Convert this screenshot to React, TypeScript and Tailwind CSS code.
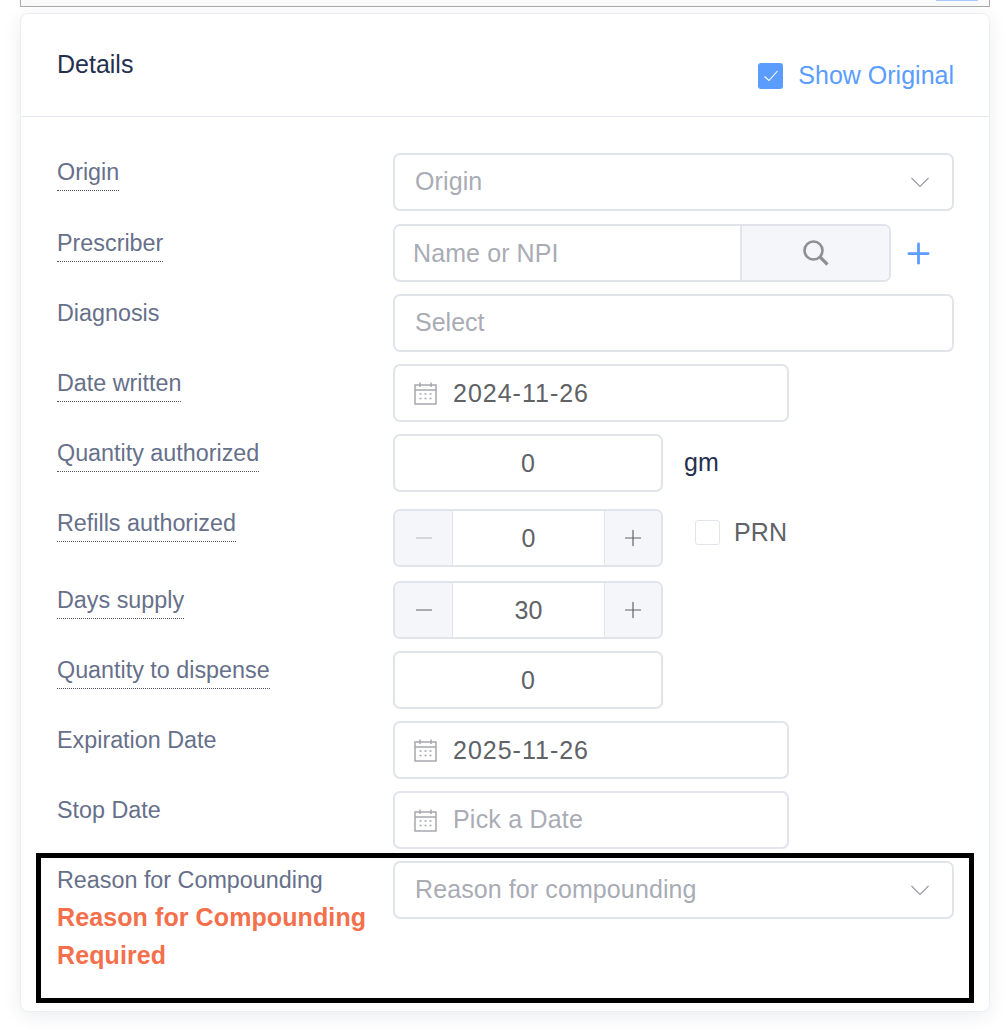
import React from 'react';
import { Plus, Minus } from 'lucide-react';

const boxCls = 'h-[58px] rounded-[7px] border-2 border-[#e2e4ec] bg-white';

function Chevron() {
    return (
        <svg width="18" height="11" viewBox="0 0 18 11" fill="none" stroke="#9b9ca3" strokeWidth="1.2">
            <path d="M0.5 1 L9 9.5 L17.5 1" />
        </svg>
    );
}

function CalendarIcon() {
    return (
        <svg width="23" height="23" viewBox="0 0 23 23" fill="none" stroke="#a6a8b0" strokeWidth="1.5">
            <rect x="1" y="3" width="21" height="19" />
            <path d="M1 8 H22 M6 0.5 V5 M17 0.5 V5" />
            <path d="M5.5 12 H7.5 M10.5 12 H12.5 M15.5 12 H17.5 M5.5 16.5 H7.5 M10.5 16.5 H12.5 M15.5 16.5 H17.5" />
        </svg>
    );
}

function SearchIcon() {
    return (
        <svg width="26" height="26" viewBox="0 0 26 26" fill="none" stroke="#8f9094" className="ml-px">
            <circle cx="10.5" cy="10.5" r="9" strokeWidth="2.6" />
            <path d="M17 17 L24.5 24.5" strokeWidth="3.2" />
        </svg>
    );
}

function Label({ text, dotted }: { text: string; dotted?: boolean }) {
    return (
        <span className={`inline-block text-[23.33px] leading-[36px] text-[#67708a] ${dotted ? 'border-b border-dotted border-[#55586a]' : ''}`}>
            {text}
        </span>
    );
}

function Row({ label, dotted, className, children }: { label: string; dotted?: boolean; className?: string; children: React.ReactNode }) {
    return (
        <div className={`flex ${className ?? ''}`}>
            <div className="w-[336px] shrink-0 pt-px">
                <Label text={label} dotted={dotted} />
            </div>
            <div className="min-w-0 flex-1">{children}</div>
        </div>
    );
}

function SelectBox({ placeholder }: { placeholder: string }) {
    return (
        <div className={`${boxCls} flex items-center justify-between pl-[20px] pr-[23px]`}>
            <span className="text-[25px] tracking-[0.1px] text-[#a9acb5]">{placeholder}</span>
            <Chevron />
        </div>
    );
}

function DateBox({ value, placeholder }: { value?: string; placeholder?: string }) {
    return (
        <div className={`${boxCls} flex w-[396px] items-center gap-[16px] pl-[19px]`}>
            <CalendarIcon />
            {value ? (
                <span className="pt-[2px] text-[25px] tracking-[1px] text-[#606266]">{value}</span>
            ) : (
                <span className="text-[25px] tracking-[0.2px] text-[#a9acb5]">{placeholder}</span>
            )}
        </div>
    );
}

function NumberBox({ value }: { value: string }) {
    return (
        <div className={`${boxCls} flex w-[270px] items-center justify-center pt-[2px] text-[25px] text-[#606266]`}>
            {value}
        </div>
    );
}

function Stepper({ value, minusDisabled }: { value: string; minusDisabled?: boolean }) {
    return (
        <div className={`${boxCls} flex w-[270px] items-stretch overflow-hidden`}>
            <div className="flex w-[58px] items-center justify-center border-r border-[#e2e4ec] bg-[#f5f6fa]">
                <Minus size={26} strokeWidth={1.1} color={minusDisabled ? '#b4b6bc' : '#606266'} />
            </div>
            <div className="flex flex-1 items-center justify-center pt-[2px] text-[25px] text-[#606266]">{value}</div>
            <div className="flex w-[57px] items-center justify-center border-l border-[#e2e4ec] bg-[#f5f6fa]">
                <Plus size={26} strokeWidth={1.1} color="#606266" />
            </div>
        </div>
    );
}

export default function App() {
    return (
        <div className="h-[1030px] w-[1008px] overflow-hidden bg-white font-['Liberation_Sans',Arial,sans-serif]">
            {/* cut-off panel above */}
            <div className="ml-[20px] mr-[18px] flex h-[7px] justify-end border-x border-b border-[#ababab] bg-[#fafafa] pr-[11px]">
                <div className="h-px w-[42px] bg-[#a6c9ff]" />
            </div>

            <div className="ml-[20px] mr-[18px] mt-[6px] h-[999px] rounded-[8px] border border-[#eceef3] bg-white shadow-[0_4px_18px_rgba(40,50,90,0.09)]">
                <div className="flex h-[103px] justify-between border-b border-[#e6e8ef] pl-[36px] pr-[35px]">
                    <h2 className="pt-[33px] text-[25px] leading-[34px] font-normal text-[#252f4f]">Details</h2>
                    <label className="flex items-center gap-[15px] pt-[22px]">
                        <span className="flex h-[26px] w-[25px] items-center justify-center rounded-[3px] bg-[#5b9dff]">
                            <svg width="16" height="14" viewBox="0 0 16 14" fill="none" stroke="#fff" strokeWidth="1.1">
                                <path d="M1.5 7.5 L6 11.5 L14.5 2" />
                            </svg>
                        </span>
                        <span className="text-[25px] text-[#5b9dff]">Show Original</span>
                    </label>
                </div>

                <div className="flex flex-col gap-[12px] pl-[36px] pr-[35px] pt-[36px]">
                    <Row label="Origin" dotted className="mb-px">
                        <SelectBox placeholder="Origin" />
                    </Row>
                    <Row label="Prescriber" dotted>
                        <div className="flex items-center">
                            <div className={`${boxCls} flex w-[498px] overflow-hidden`}>
                                <div className="flex flex-1 items-center pl-[18px] pt-[2px] text-[25px] tracking-[0.1px] text-[#a9acb5]">Name or NPI</div>
                                <div className="flex w-[149px] items-center justify-center border-l-2 border-[#e2e4ec] bg-[#f5f6fa]">
                                    <SearchIcon />
                                </div>
                            </div>
                            <Plus size={33} strokeWidth={2} color="#5b9dff" className="ml-[11px]" />
                        </div>
                    </Row>
                    <Row label="Diagnosis">
                        <div className={`${boxCls} flex items-center pl-[20px] text-[25px] text-[#a9acb5]`}>Select</div>
                    </Row>
                    <Row label="Date written" dotted>
                        <DateBox value="2024-11-26" />
                    </Row>
                    <Row label="Quantity authorized" dotted>
                        <div className="flex items-center gap-[21px]">
                            <NumberBox value="0" />
                            <span className="text-[25px] text-[#252f4f]">gm</span>
                        </div>
                    </Row>
                    <Row label="Refills authorized" dotted>
                        <div className="flex items-start pb-[2px] pt-[5px]">
                            <Stepper value="0" minusDisabled />
                            <label className="ml-[32px] mt-[5px] flex items-center gap-[14px]">
                                <span className="h-[25px] w-[25px] rounded-[3px] border border-[#e2e4ec] bg-white" />
                                <span className="text-[25px] tracking-[0.1px] text-[#606266]">PRN</span>
                            </label>
                        </div>
                    </Row>
                    <Row label="Days supply" dotted>
                        <Stepper value="30" />
                    </Row>
                    <Row label="Quantity to dispense" dotted>
                        <NumberBox value="0" />
                    </Row>
                    <Row label="Expiration Date">
                        <DateBox value="2025-11-26" />
                    </Row>
                    <Row label="Stop Date">
                        <DateBox placeholder="Pick a Date" />
                    </Row>

                    <div className="relative flex">
                        <div className="w-[336px] shrink-0">
                            <div className="pt-px text-[23.33px] leading-[36px] text-[#67708a]">Reason for Compounding</div>
                            <div className="w-[320px] text-[25px] leading-[38px] font-bold tracking-[0.1px] text-[#f4704c]">
                                Reason for Compounding Required
                            </div>
                        </div>
                        <div className="min-w-0 flex-1">
                            <SelectBox placeholder="Reason for compounding" />
                        </div>
                        {/* annotation frame drawn over the row */}
                        <div className="pointer-events-none absolute -left-[21px] -right-[20px] -top-[8px] h-[150px] border-[5px] border-black" />
                    </div>
                </div>
            </div>
        </div>
    );
}
